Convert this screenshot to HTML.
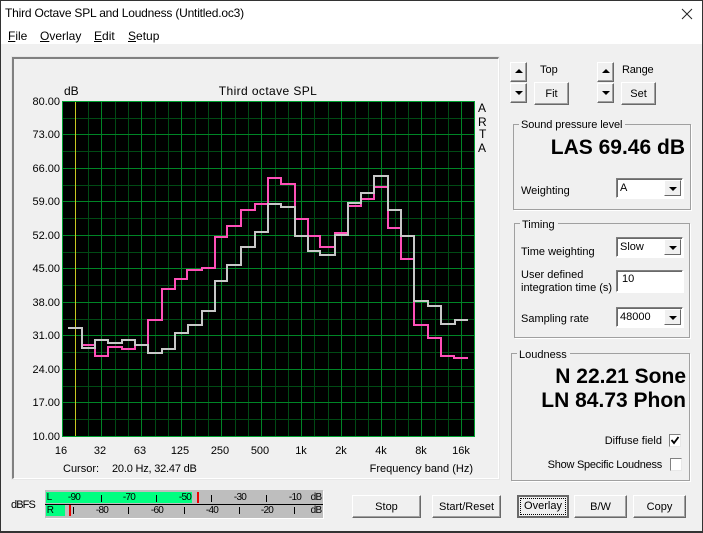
<!DOCTYPE html>
<html><head><meta charset="utf-8"><style>
html,body{margin:0;padding:0;background:#f0f0f0}
#w{position:relative;width:703px;height:533px;overflow:hidden;background:#f0f0f0;font:11px "Liberation Sans",sans-serif;color:#000}
.t{position:absolute;white-space:nowrap;line-height:14px;height:14px}
.r{text-align:right}.c{text-align:center}
.b{position:absolute;box-sizing:border-box;background:#f0f0f0;border:1px solid;border-color:#fff #696969 #696969 #fff;box-shadow:inset -1px -1px 0 #a0a0a0;text-align:center;font-size:11px}
.g{position:absolute;box-sizing:border-box;border:1px solid #a0a0a0;box-shadow:1px 1px 0 #fff}
.gl{position:absolute;background:#f0f0f0;padding:0 3px 0 2px;line-height:14px;white-space:nowrap}
.cb{position:absolute;box-sizing:border-box;background:#fff;border:1px solid;border-color:#808080 #fff #fff #808080;box-shadow:inset 1px 1px 0 #696969,1px 1px 0 #fff;padding:3px 0 0 3px;line-height:13px}
.ar{position:absolute;right:1px;top:1px;bottom:1px;width:17px;box-sizing:border-box;background:#f0f0f0;border:1px solid;border-color:#fff #696969 #696969 #fff}
.tu,.td{position:absolute;left:50%;margin-left:-4px;width:0;height:0;border-left:4px solid transparent;border-right:4px solid transparent}
.tu{border-bottom:4px solid #000}.td{border-top:4px solid #000}
.big{position:absolute;font-weight:bold;font-size:21px;line-height:24px;white-space:nowrap;text-align:right}
.chk{position:absolute;box-sizing:border-box;width:12px;height:13px;background:#fff;border:1px solid;border-color:#808080 #e8e8e8 #e8e8e8 #808080}
u{text-decoration-thickness:1px;text-underline-offset:1px}
.m{position:absolute;font-size:10px;line-height:11px;transform:translateX(-50%);letter-spacing:-.7px;white-space:nowrap}
.k{position:absolute;width:1px;height:7px;background:#000}
</style></head><body><div id="w">
<div style="position:absolute;left:0;top:0;width:703px;height:44px;background:#fff"></div>
<div style="position:absolute;left:0;top:0;width:703px;height:1px;background:#333"></div>
<div style="position:absolute;left:0;top:0;width:1px;height:533px;background:#333"></div>
<div style="position:absolute;right:0;top:0;width:1px;height:533px;background:#333"></div>
<div style="position:absolute;left:0;top:531px;width:703px;height:2px;background:#333"></div>

<div class="t" style="left:5px;top:6px;font-size:12px;letter-spacing:-.2px">Third Octave SPL and Loudness (Untitled.oc3)</div>
<svg style="position:absolute;left:681px;top:8px" width="12" height="12"><path d="M1 1L11 11M11 1L1 11" stroke="#222" stroke-width="1" fill="none"/></svg>
<div class="t" style="left:8px;top:29px;font-size:12px"><u>F</u>ile</div>
<div class="t" style="left:40px;top:29px;font-size:12px"><u>O</u>verlay</div>
<div class="t" style="left:94px;top:29px;font-size:12px"><u>E</u>dit</div>
<div class="t" style="left:128px;top:29px;font-size:12px"><u>S</u>etup</div>

<div style="position:absolute;box-sizing:border-box;left:12px;top:57px;width:487px;height:422px;border:2px solid;border-color:#808080 #fff #fff #808080;border-right-width:1px;border-bottom-width:1px;box-shadow:0 0 0 1px rgba(225,225,225,.6)"></div>

<svg style="position:absolute;left:0;top:0" width="703" height="533" shape-rendering="crispEdges">
<rect x="62" y="101" width="413" height="336" fill="#000"/>
<g fill="none" stroke="#004a14" stroke-width="1">
<path d="M75.5 101V436M88.5 101V436M115.5 101V436M128.5 101V436M155.5 101V436M168.5 101V436M195.5 101V436M208.5 101V436M235.5 101V436M248.5 101V436M275.5 101V436M288.5 101V436M314.5 101V436M328.5 101V436M355.5 101V436M368.5 101V436M395.5 101V436M408.5 101V436M435.5 101V436M448.5 101V436"/>
<path d="M62 118.5H474M62 151.5H474M62 185.5H474M62 218.5H474M62 252.5H474M62 285.5H474M62 319.5H474M62 352.5H474M62 386.5H474M62 419.5H474"/>
</g>
<g fill="none" stroke="#008426" stroke-width="1">
<path d="M101.5 101V436M141.5 101V436M181.5 101V436M221.5 101V436M261.5 101V436M301.5 101V436M341.5 101V436M381.5 101V436M421.5 101V436M461.5 101V436"/>
<path d="M62 134.5H474M62 168.5H474M62 201.5H474M62 235.5H474M62 268.5H474M62 302.5H474M62 335.5H474M62 369.5H474M62 402.5H474"/>
</g>
<path d="M75.5 102V436" stroke="#c8c820" stroke-width="1" fill="none"/>
<rect x="62.5" y="101.5" width="412" height="335" fill="none" stroke="#00a030" stroke-width="1"/>
<path fill="none" stroke="#ff50b8" stroke-width="2" d="M68 328H82V345H95V356H108V347H122V349H135V345H148V320H162V289H175V279H187V270H202V268H215V237H227V226H241V210H255V204H268V178H281V184H295V219H308V236H320V247H335V233H348V206H361V199H374V187H388V228H401V259H414V325H428V338H441V356H454V358H468"/>
<path fill="none" stroke="#c8c8c8" stroke-width="2" d="M68 328H82V348H95V340H108V343H122V340H135V345H148V353H162V349H175V333H188V325H202V311H215V281H227V265H241V247H255V232H268V204H281V207H295V236H308V251H320V255H335V235H348V203H361V193H374V176H388V210H401V236H414V301H428V306H441V324H455V320H468"/>
</svg>

<div class="t" style="left:64px;top:84px;font-size:12px">dB</div>
<div class="t c" style="left:168px;top:84px;width:200px;font-size:12px;letter-spacing:.4px">Third octave SPL</div>
<div class="t r" style="left:20px;top:95px;width:40px">80.00</div>
<div class="t r" style="left:20px;top:128px;width:40px">73.00</div>
<div class="t r" style="left:20px;top:162px;width:40px">66.00</div>
<div class="t r" style="left:20px;top:195px;width:40px">59.00</div>
<div class="t r" style="left:20px;top:229px;width:40px">52.00</div>
<div class="t r" style="left:20px;top:262px;width:40px">45.00</div>
<div class="t r" style="left:20px;top:296px;width:40px">38.00</div>
<div class="t r" style="left:20px;top:329px;width:40px">31.00</div>
<div class="t r" style="left:20px;top:363px;width:40px">24.00</div>
<div class="t r" style="left:20px;top:396px;width:40px">17.00</div>
<div class="t r" style="left:20px;top:430px;width:40px">10.00</div>
<div class="t c" style="left:41px;top:444px;width:40px">16</div>
<div class="t c" style="left:80px;top:444px;width:40px">32</div>
<div class="t c" style="left:120px;top:444px;width:40px">63</div>
<div class="t c" style="left:160px;top:444px;width:40px">125</div>
<div class="t c" style="left:200px;top:444px;width:40px">250</div>
<div class="t c" style="left:240px;top:444px;width:40px">500</div>
<div class="t c" style="left:281px;top:444px;width:40px">1k</div>
<div class="t c" style="left:321px;top:444px;width:40px">2k</div>
<div class="t c" style="left:361px;top:444px;width:40px">4k</div>
<div class="t c" style="left:401px;top:444px;width:40px">8k</div>
<div class="t c" style="left:441px;top:444px;width:40px">16k</div>
<div class="t" style="left:63px;top:462px">Cursor:</div>
<div class="t" style="left:112px;top:462px;letter-spacing:-.2px">20.0 Hz, 32.47 dB</div>
<div class="t r" style="left:340px;top:462px;width:133px">Frequency band (Hz)</div>
<div class="t" style="left:478px;top:101px;font-size:12px">A</div>
<div class="t" style="left:478px;top:115px;font-size:12px">R</div>
<div class="t" style="left:479px;top:127px;font-size:12px">T</div>
<div class="t" style="left:478px;top:141px;font-size:12px">A</div>

<div class="b" style="left:510px;top:62px;width:17px;height:20px"><i class="tu" style="top:6px"></i></div>
<div class="b" style="left:510px;top:83px;width:17px;height:20px"><i class="td" style="top:7px"></i></div>
<div class="b" style="left:534px;top:82px;width:35px;height:23px;line-height:23px">Fit</div>
<div class="t" style="left:540px;top:63px">Top</div>
<div class="b" style="left:597px;top:62px;width:17px;height:20px"><i class="tu" style="top:6px"></i></div>
<div class="b" style="left:597px;top:83px;width:17px;height:20px"><i class="td" style="top:7px"></i></div>
<div class="b" style="left:621px;top:82px;width:35px;height:23px;line-height:23px">Set</div>
<div class="t" style="left:622px;top:63px;letter-spacing:-.2px">Range</div>

<div class="g" style="left:513px;top:124px;width:178px;height:86px"></div>
<div class="gl" style="left:519px;top:118px;letter-spacing:-.1px">Sound pressure level</div>
<div class="big" style="left:480px;top:136px;width:205px">LAS 69.46 dB</div>
<div class="t" style="left:521px;top:184px">Weighting</div>
<div class="cb" style="left:616px;top:178px;width:67px;height:20px">A<div class="ar"><i class="td" style="top:6px"></i></div></div>

<div class="g" style="left:514px;top:223px;width:176px;height:115px"></div>
<div class="gl" style="left:520px;top:218px">Timing</div>
<div class="t" style="left:521px;top:245px">Time weighting</div>
<div class="cb" style="left:616px;top:237px;width:67px;height:20px">Slow<div class="ar"><i class="td" style="top:6px"></i></div></div>
<div class="t" style="left:521px;top:268px">User defined</div>
<div class="t" style="left:521px;top:281px">integration time (s)</div>
<div class="cb" style="left:616px;top:270px;width:67px;height:22px;padding:2px 0 0 5px">10</div>
<div class="t" style="left:521px;top:312px">Sampling rate</div>
<div class="cb" style="left:616px;top:307px;width:67px;height:20px">48000<div class="ar"><i class="td" style="top:6px"></i></div></div>

<div class="g" style="left:511px;top:353px;width:179px;height:128px"></div>
<div class="gl" style="left:517px;top:348px">Loudness</div>
<div class="big" style="left:480px;top:365px;width:206px">N 22.21 Sone</div>
<div class="big" style="left:480px;top:389px;width:206px">LN 84.73 Phon</div>
<div class="t r" style="left:540px;top:434px;width:122px">Diffuse field</div>
<div class="chk" style="left:669px;top:434px"><svg style="position:absolute;left:0;top:0" width="10" height="11"><path d="M1.5 5L4 8L8.5 2" fill="none" stroke="#000" stroke-width="1.8"/></svg></div>
<div class="t r" style="left:520px;top:458px;width:142px;letter-spacing:-.25px">Show Specific Loudness</div>
<div class="chk" style="left:670px;top:458px"></div>

<div class="t" style="left:11px;top:498px;letter-spacing:-.9px">dBFS</div>
<div style="position:absolute;left:45px;top:490px;width:278px;height:28px;background:#bebebe;box-shadow:1px 1px 0 #fff"></div>
<div style="position:absolute;left:46px;top:492px;width:146px;height:11px;background:#00ff80"></div>
<div style="position:absolute;left:46px;top:505px;width:19px;height:11px;background:#00ff80"></div>
<div style="position:absolute;left:45px;top:504px;width:278px;height:1px;background:#000"></div>
<div style="position:absolute;left:197px;top:492px;width:2px;height:11px;background:#ee0000"></div>
<div style="position:absolute;left:69px;top:505px;width:2px;height:11px;background:#ee0000"></div>
<div class="m" style="left:49px;top:492px">L</div><div class="m" style="left:50px;top:505px">R</div>
<div class="m" style="left:74px;top:492px">-90</div><div class="k" style="left:101px;top:495px"></div>
<div class="m" style="left:129px;top:492px">-70</div><div class="k" style="left:156px;top:495px"></div>
<div class="m" style="left:185px;top:492px">-50</div><div class="k" style="left:211px;top:495px"></div>
<div class="m" style="left:240px;top:492px">-30</div><div class="k" style="left:266px;top:495px"></div>
<div class="m" style="left:295px;top:492px">-10</div><div class="m" style="left:316px;top:492px">dB</div>
<div class="k" style="left:73px;top:507px"></div><div class="m" style="left:102px;top:505px">-80</div>
<div class="k" style="left:128px;top:507px"></div><div class="m" style="left:157px;top:505px">-60</div>
<div class="k" style="left:184px;top:507px"></div><div class="m" style="left:212px;top:505px">-40</div>
<div class="k" style="left:239px;top:507px"></div><div class="m" style="left:267px;top:505px">-20</div>
<div class="k" style="left:294px;top:507px"></div><div class="m" style="left:316px;top:505px">dB</div>

<div class="b" style="left:352px;top:495px;width:69px;height:23px;line-height:23px">Stop</div>
<div class="b" style="left:432px;top:495px;width:69px;height:23px;line-height:23px">Start/Reset</div>
<div class="b" style="left:517px;top:495px;width:52px;height:23px;line-height:19px;border:2px solid #696969;box-shadow:none"><span style="display:block;margin:1px;height:15px;line-height:15px;border:1px dotted #000">Overlay</span></div>
<div class="b" style="left:574px;top:495px;width:53px;height:23px;line-height:23px">B/W</div>
<div class="b" style="left:633px;top:495px;width:53px;height:23px;line-height:23px">Copy</div>
</div></body></html>
